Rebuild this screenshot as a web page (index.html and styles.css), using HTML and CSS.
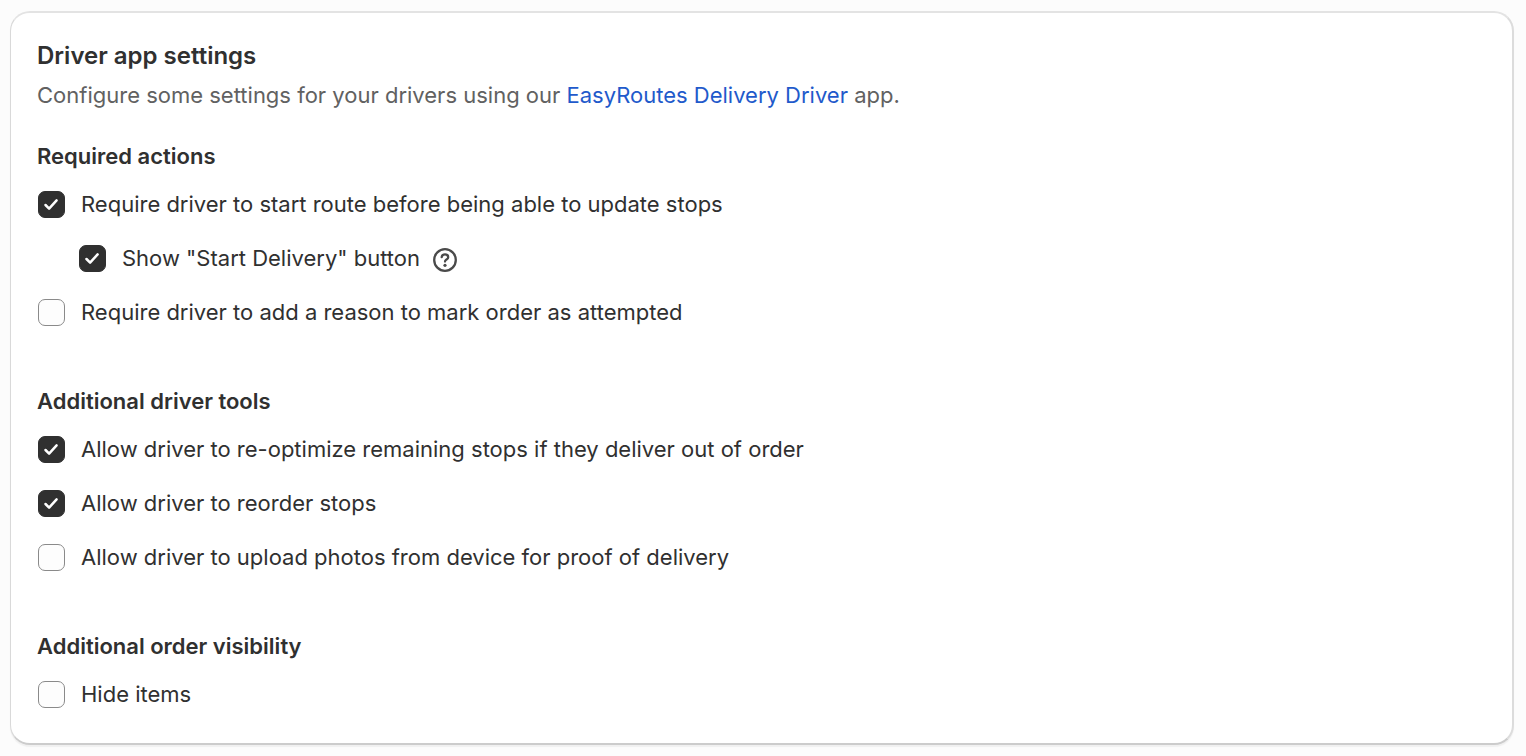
FILE: index.html
```html
<!DOCTYPE html>
<html lang="en">
<head>
<meta charset="utf-8">
<meta name="viewport" content="width=device-width, initial-scale=1">
<title>Driver app settings</title>
<link rel="stylesheet" href="styles.css">
</head>
<body>
<main class="card">
  <header class="card-header">
    <h1 class="title">Driver app settings</h1>
    <p class="subtitle">Configure some settings for your drivers using our <a class="link" href="#">EasyRoutes Delivery Driver</a> app.</p>
  </header>
  <div class="groups">
    <section>
      <h2 class="heading">Required actions</h2>
      <div class="options">
        <label class="option"><input class="checkbox" type="checkbox" checked>Require driver to start route before being able to update stops</label>
        <div class="nested">
          <label class="option"><input class="checkbox" type="checkbox" checked>Show "Start Delivery" button</label>
          <button class="help" type="button" aria-label="About the Start Delivery button">
            <svg class="help-icon" viewBox="0 0 26 26" fill="none" stroke="currentColor" stroke-width="2.3" stroke-linecap="round" stroke-linejoin="round" aria-hidden="true">
              <circle cx="13" cy="13" r="10.8"/>
              <path d="M9.7 10.2c.2-1.800 1.500-2.900 3.300-2.900 1.900 0 3.200 1.200 3.200 2.900 0 2.400-3.200 2.300-3.200 4.400"/>
              <circle cx="13" cy="18.300" r="1.600" fill="currentColor" stroke="none"/>
            </svg>
          </button>
        </div>
        <label class="option"><input class="checkbox" type="checkbox">Require driver to add a reason to mark order as attempted</label>
      </div>
    </section>
    <section>
      <h2 class="heading">Additional driver tools</h2>
      <div class="options">
        <label class="option"><input class="checkbox" type="checkbox" checked>Allow driver to re-optimize remaining stops if they deliver out of order</label>
        <label class="option"><input class="checkbox" type="checkbox" checked>Allow driver to reorder stops</label>
        <label class="option"><input class="checkbox" type="checkbox">Allow driver to upload photos from device for proof of delivery</label>
      </div>
    </section>
    <section>
      <h2 class="heading">Additional order visibility</h2>
      <div class="options">
        <label class="option"><input class="checkbox" type="checkbox">Hide items</label>
      </div>
    </section>
  </div>
</main>
</body>
</html>
```
FILE: styles.css
```css
* { box-sizing: border-box; }
body {
  margin: 0;
  padding: 11px 12px 11px 10px;
  background: #fcfcfc;
  color: #303030;
  font-family: Inter, "Liberation Sans", sans-serif;
  font-size: 22px;
  line-height: 30px;
}
.card {
  display: flex;
  flex-direction: column;
  gap: 31px;
  padding: 27px 26px 34px;
  background: #fff;
  border: solid;
  border-width: 2px 2px 2px 1px;
  border-color: #e3e3e3 #dcdcdc #cccccc #d9d9d9;
  border-radius: 20px;
  box-shadow: 0 2px 1px #f0f0f0;
}
h1, h2, p { margin: 0; }
.title { font-size: 24px; line-height: 32px; font-weight: 600; }
.subtitle { padding-top: 8px; color: #616161; }
.link { color: #1f5acb; text-decoration: none; }
.groups { display: flex; flex-direction: column; gap: 59px; }
.heading { font-size: 22px; line-height: 30px; font-weight: 600; }
.options {
  display: flex;
  flex-direction: column;
  gap: 24px;
  padding-top: 18px;
}
.option { display: flex; align-items: center; gap: 16px; }
.nested { display: flex; align-items: center; gap: 12px; padding-left: 41px; }
.checkbox {
  appearance: none;
  flex: none;
  width: 27px;
  height: 27px;
  margin: 1px 0 0 1px;
  background: #fdfdfd;
  border: 1px solid #8a8a8a;
  border-radius: 7px;
}
.checkbox:checked {
  border-color: #303030;
  background: #303030 url("data:image/svg+xml,%3Csvg xmlns='http://www.w3.org/2000/svg' viewBox='0 0 27 27' fill='none' stroke='white' stroke-width='2.5' stroke-linecap='round' stroke-linejoin='round'%3E%3Cpath d='M7.500 14l3.600 3.600 7.500-8.200'/%3E%3C/svg%3E") center / 27px 27px;
}
.help { padding: 4px 0 0; border: 0; background: none; color: #4a4a4a; }
.help-icon { display: block; width: 26px; height: 26px; }
```
